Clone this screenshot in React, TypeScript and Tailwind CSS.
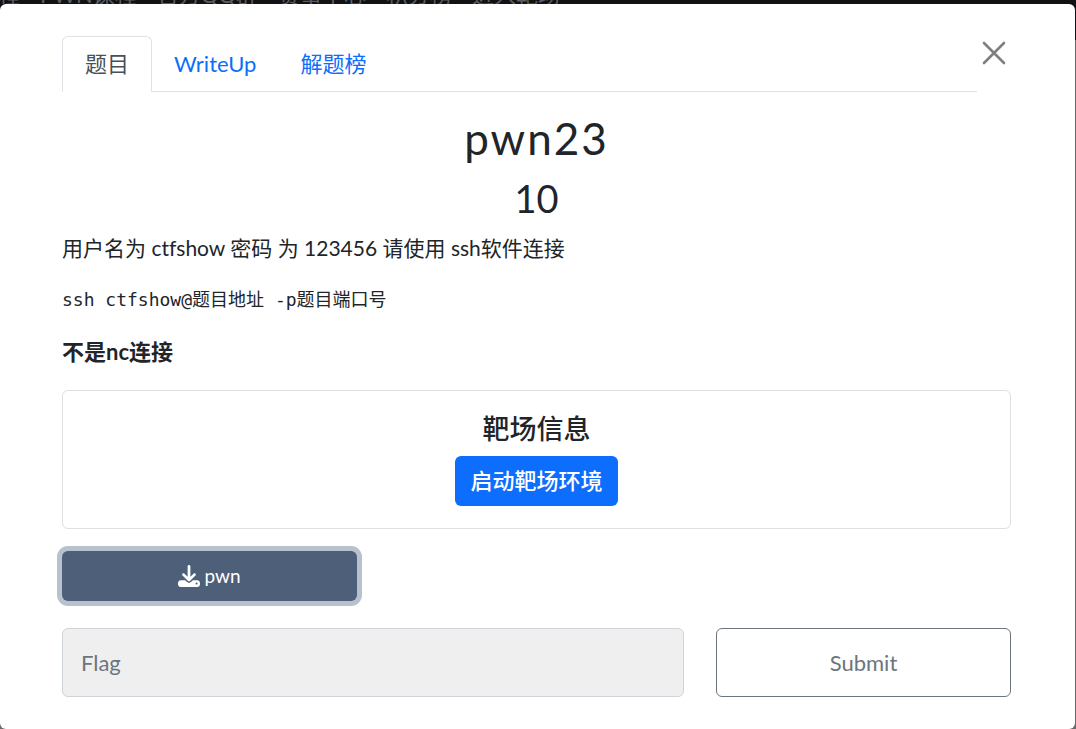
import { FaDownload } from "react-icons/fa6";

const navLinks = ["课程", "PWN课程", "官方QQ群", "赛事中心", "积分榜", "进入靶场"];

const tabs = [
  { id: "challenge", name: "题目" },
  { id: "writeup", name: "WriteUp" },
  { id: "solves", name: "解题榜" },
];

function Navbar() {
  return (
    <nav className="flex h-1 items-end gap-5 overflow-hidden whitespace-nowrap bg-[#111214] leading-[18px] text-[#5c5d61]">
      {navLinks.map((link, i) => (
        <a key={link} href="#" className={i === 0 ? "-ml-6" : ""}>
          {link}
        </a>
      ))}
    </nav>
  );
}

function Tabs() {
  return (
    <div role="tablist" className="flex flex-1 border-b border-[#dee2e6]">
      {tabs.map((tab) => (
        <a
          key={tab.id}
          href={`#${tab.id}`}
          role="tab"
          aria-selected={tab.id === "challenge"}
          className={
            tab.id === "challenge"
              ? "-mb-px rounded-t-md border border-b-white border-[#dee2e6] bg-white px-[22px] py-[11px] text-[#495057]"
              : "px-[22px] pt-3 pb-[11px] text-[#0d6efd]"
          }
        >
          {tab.name}
        </a>
      ))}
    </div>
  );
}

function App() {
  return (
    <div className="min-h-screen bg-[#6b6b6b] font-[Lato,'Noto_Sans_CJK_SC',sans-serif] text-[22px] leading-8 text-[#212529] [font-variant-ligatures:none]">
      <Navbar />
      <div className="bg-linear-to-b from-[#111214] from-5% to-[#6b6b6b] to-5%">
        <main className="mr-px rounded-md bg-white py-8 pr-16 pl-[62px]">
          <div className="flex items-start">
            <Tabs />
            <button type="button" aria-label="Close" className="mx-1 mt-1 flex text-[#7f7f7f]">
              <svg
                viewBox="0 0 26 26"
                className="size-[26px]"
                fill="none"
                stroke="currentColor"
                strokeWidth="2.6"
                strokeLinecap="round"
              >
                <path d="M3 3l20 20M23 3L3 23" />
              </svg>
            </button>
          </div>

          <h2 className="mt-5 text-center text-[44px] leading-[52px] tracking-[2px]">pwn23</h2>
          <h3 className="mt-[11px] text-center text-[38px] leading-[46px]">10</h3>

          <p className="mt-[11px] text-[21px]">用户名为 ctfshow 密码 为 123456 请使用 ssh软件连接</p>
          <pre className="mt-5 font-['DejaVu_Sans_Mono','Noto_Sans_CJK_SC',monospace] text-[18px] leading-8">
            ssh ctfshow@题目地址 -p题目端口号
          </pre>
          <p className="mt-5 font-bold">不是nc连接</p>

          <section className="mt-[22px] flex flex-col items-center rounded-md border border-[#dfdfdf] py-[22px]">
            <h5 className="text-[27px] font-medium leading-8">靶场信息</h5>
            <button
              type="button"
              className="mt-[11px] rounded-md bg-[#0d6efd] px-[15px] py-[9px] font-medium text-white"
            >
              启动靶场环境
            </button>
          </section>

          <div className="mt-[22px] grid grid-cols-3 gap-8">
            <a
              href="#pwn"
              className="flex h-[50px] items-center justify-center gap-1 rounded-md bg-[#4e6079] text-[19px] text-white ring-5 ring-[#b8c1ce]"
            >
              <FaDownload className="size-[22px]" />
              pwn
            </a>
          </div>

          <form className="mt-[27px] grid grid-cols-3 gap-8">
            <input
              type="text"
              aria-label="Flag"
              placeholder="Flag"
              className="col-span-2 h-[69px] rounded-md border border-[#ced4da] bg-[#efefef] px-[18px] placeholder:text-[#6c757d]"
            />
            <button type="button" className="h-[69px] rounded-md border border-[#6c757d] text-[#6c757d]">
              Submit
            </button>
          </form>
        </main>
      </div>
    </div>
  );
}

export default App;
